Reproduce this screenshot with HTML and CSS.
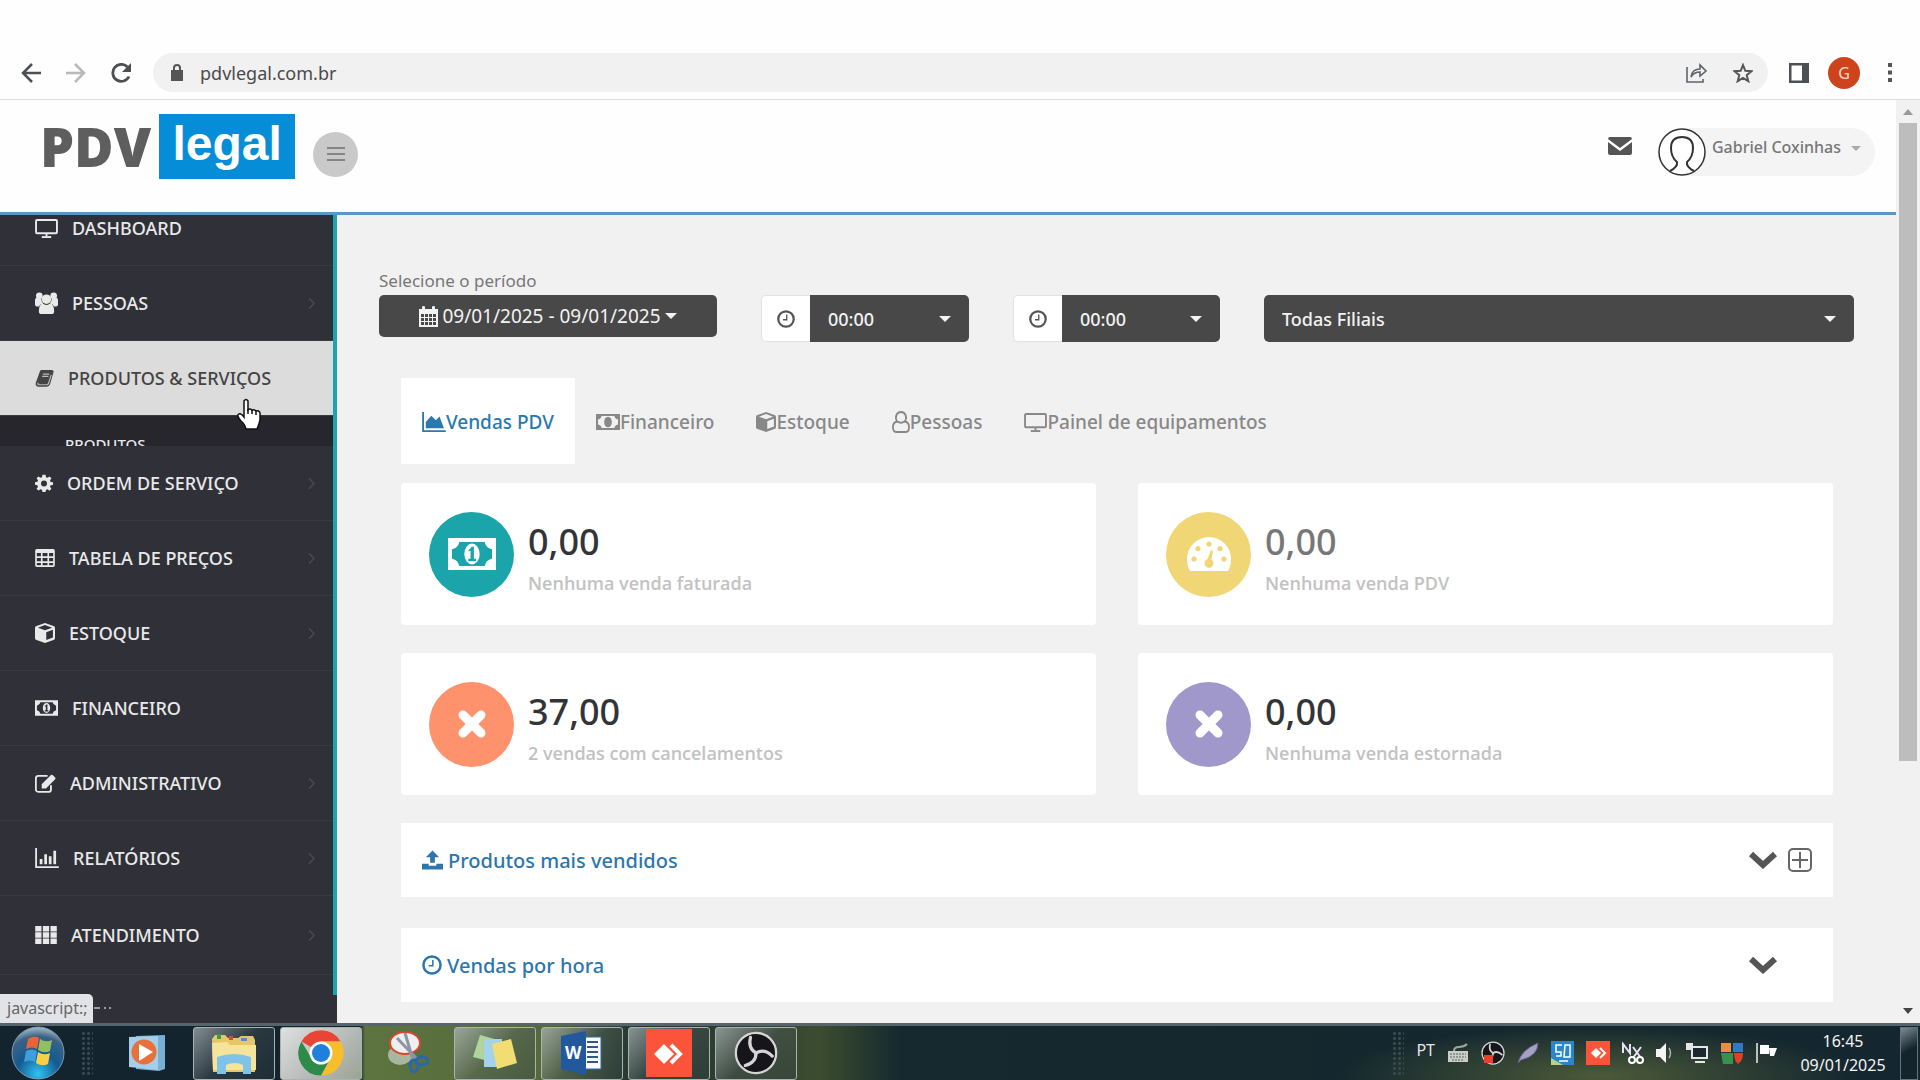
FILE: index.html
```html
<!DOCTYPE html>
<html lang="pt-BR">
<head>
<meta charset="utf-8">
<title>PDV Legal</title>
<link rel="stylesheet" href="styles.css">
</head>
<body>
<svg class="defs" aria-hidden="true">
  <symbol id="i-monitor" viewBox="0 0 24 20"><path fill="none" stroke="currentColor" stroke-width="2" d="M2 1h20q1 0 1 1v12q0 1-1 1H2q-1 0-1-1V2q0-1 1-1zM12 15v3"/><path fill="currentColor" d="M7 18h10v2H7z"/></symbol>
  <symbol id="i-people" viewBox="0 0 24 24"><g fill="currentColor"><circle cx="4.500" cy="4" r="3.500"/><circle cx="19.500" cy="4" r="3.500"/><circle cx="12" cy="7.500" r="5"/><path d="M0 13V9q0-3 2-3 2 2 4.500 1 0 3 2 5-3 0-4.500 3H2q-2 0-2-2zM24 13V9q0-3-2-3-2 2-4.500 1 0 3-2 5 3 0 4.500 3h2q2 0 2-2zM4 20q0-7 4-8 4 3 8 0 4 1 4 8 0 3-3 3H7q-3 0-3-3z"/></g></symbol>
  <symbol id="i-book" viewBox="0 0 24 24"><path fill="currentColor" d="M8 2h13q3 0 2.300 3L19 20q-1 3-4 3H4q-4-1-3-5L6 4q.5-2 2-2z"/><path fill="none" stroke="#bbb" stroke-width="1.500" d="M10 7h8M9 10h8M4 18q-1 2.500 1 2.500h10q1.500 0 2-1.500l3.500-11"/></symbol>
  <symbol id="i-gear" viewBox="0 0 24 24"><path fill="currentColor" fill-rule="evenodd" d="M10 1h4l.7 3.300 2 .8L19.500 3.300l2.400 2.400L20 8.500l.8 2L24 11v3.500l-3.200.6-.8 2 1.900 2.700-2.500 2.400-2.700-1.800-2 .8L14 24h-4l-.7-3-2-.8-2.800 1.900L2 19.700 4 17l-.9-2L0 14.400V11l3.200-.6.8-2L2.100 5.700 4.500 3.300l2.800 1.800 2-.8zM12 8.500a4 4 0 1 0 0 8 4 4 0 1 0 0-8z"/></symbol>
  <symbol id="i-table" viewBox="0 0 24 22"><path fill="currentColor" fill-rule="evenodd" d="M2 0h20q2 0 2 2v18q0 2-2 2H2q-2 0-2-2V2Q0 0 2 0zM2 5v4h5V5zM9 5v4h6V5zM17 5v4h5V5zM2 11v4h5v-4zM9 11v4h6v-4zM17 11v4h5v-4zM2 17v3h5v-3zM9 17v3h6v-3zM17 17v3h5v-3z"/></symbol>
  <symbol id="i-cube" viewBox="0 0 24 24"><path fill="currentColor" fill-rule="evenodd" d="M12 0l11 4q1 .5 1 2v12q0 1.300-1 2l-11 4-11-4q-1-.6-1-2V6q0-1.500 1-2zM12 2.500L3.500 5.600 12 8.800l8.500-3.200zM13.500 20.500l8-3V8l-8 3z"/></symbol>
  <symbol id="i-money" viewBox="0 0 30 20"><path fill="currentColor" fill-rule="evenodd" d="M0 0h30v20H0zM7 2.500Q6.500 6 2.500 7v6q4 1 4.500 4.500h16q.5-3.500 4.500-4.500V7q-4-1-4.500-4.500z"/><ellipse cx="15" cy="10" rx="4.800" ry="6.500" fill="currentColor"/><path class="cut" d="M12.800 7.800l2-2.300h1.400v7.500h1.300v1.500h-4.800V13h1.400V8l-1.300.5z"/></symbol>
  <symbol id="i-edit" viewBox="0 0 25 22"><path fill="none" stroke="currentColor" stroke-width="2.200" d="M19 13v5q0 3-3 3H4q-3 0-3-3V5q0-3 3-3h11"/><path fill="currentColor" d="M8 17v-5L19 1q1-1 2 0l3 3q1 1 0 2L13 17z"/></symbol>
  <symbol id="i-bars" viewBox="0 0 26 22"><path fill="currentColor" d="M0 0h2v20h24v2H0zM5 12h3v6H5zM10 7h3v11h-3zM15 9h3v9h-3zM20 3h3v15h-3z"/></symbol>
  <symbol id="i-grid" viewBox="0 0 24 20"><path fill="currentColor" d="M0 0h7v6H0zM8.500 0h7v6h-7zM17 0h7v6h-7zM0 7h7v6H0zM8.500 7h7v6h-7zM17 7h7v6h-7zM0 14h7v6H0zM8.500 14h7v6h-7zM17 14h7v6h-7z"/></symbol>
  <symbol id="i-chev" viewBox="0 0 8 14"><path fill="none" stroke="currentColor" stroke-width="1.500" d="M1 1l6 6-6 6"/></symbol>
  <symbol id="i-clock" viewBox="0 0 24 24"><circle cx="12" cy="12" r="10.300" fill="none" stroke="currentColor" stroke-width="3"/><path fill="none" stroke="currentColor" stroke-width="1.800" d="M13 6v7H8"/></symbol>
  <symbol id="i-area" viewBox="0 0 26 22"><path fill="currentColor" d="M0 0h2v20h24v2H0zM4 18v-7l6-7 5 5 4-4 5 13z"/></symbol>
  <symbol id="i-user" viewBox="0 0 18 22"><path fill="none" stroke="currentColor" stroke-width="1.800" d="M9 1a5 5.500 0 0 1 3.500 9.500Q17 11 17 16q0 5-3 5H4q-3 0-3-5 0-5 4.500-5.500A5 5.500 0 0 1 9 1zM5.500 10.500q3.500 2.500 7 0"/></symbol>
  <symbol id="i-times" viewBox="0 0 30 30"><path stroke="currentColor" stroke-width="9" stroke-linecap="round" d="M6 6l18 18M24 6L6 24"/></symbol>
  <symbol id="i-dash" viewBox="0 0 44 34"><path fill="currentColor" d="M3 34Q0 29 0 22a22 22 0 0 1 44 0q0 7-3 12z"/><g class="cut"><circle cx="7" cy="22" r="2.600"/><circle cx="11" cy="11.500" r="2.600"/><circle cx="22" cy="7" r="2.600"/><circle cx="33" cy="11.500" r="2.600"/><circle cx="37" cy="22" r="2.600"/><path d="M24 13l2 1-1.500 8.500a4.500 4.500 0 1 1-4-.5z"/></g></symbol>
  <symbol id="i-upload" viewBox="0 0 22 20"><path fill="currentColor" d="M11 0l7 7h-4.500v6h-5V7H4zM0 14h7v2h8v-2h7v6H0z"/></symbol>
  <symbol id="i-down" viewBox="0 0 28 18"><path fill="none" stroke="currentColor" stroke-width="6" d="M2 3l12 11L26 3"/></symbol>
  <symbol id="i-obs" viewBox="0 0 48 48"><circle cx="24" cy="24" r="22" fill="#15151a" stroke="#d5d5d5" stroke-width="2.500"/><path id="obs-arm" fill="none" stroke="#d5d5d5" stroke-width="3.500" stroke-linecap="round" d="M24 24q-9-5-6-17"/><use href="#obs-arm" transform="rotate(120 24 24)"/><use href="#obs-arm" transform="rotate(240 24 24)"/></symbol>
</svg>

<header class="toolbar">
  <button class="tool" aria-label="Voltar"><svg width="20" height="20" viewBox="0 0 20 20"><path fill="none" stroke="#4d5053" stroke-width="2.500" d="M20 10H2M11 1l-9 9 9 9"/></svg></button>
  <button class="tool" aria-label="Avançar"><svg width="20" height="20" viewBox="0 0 20 20"><path fill="none" stroke="#b9b9b9" stroke-width="2.500" d="M0 10h18M9 1l9 9-9 9"/></svg></button>
  <button class="tool" aria-label="Recarregar"><svg width="21" height="20" viewBox="0 0 21 20"><path fill="none" stroke="#4d5053" stroke-width="2.800" d="M18 13.500A8.500 8.500 0 1 1 16.500 4"/><path fill="#4d5053" d="M20 0v9h-9z"/></svg></button>
  <div class="omnibox">
    <svg width="12" height="17" viewBox="0 0 12 17"><path fill="#555" d="M0 6h12v11H0z"/><path fill="none" stroke="#555" stroke-width="2" d="M3 7V4a3 3 0 0 1 6 0v3"/></svg>
    <input class="url" aria-label="Endereço" value="pdvlegal.com.br">
    <button class="tool" aria-label="Compartilhar"><svg width="22" height="20" viewBox="0 0 22 20"><path fill="none" stroke="#5f6368" stroke-width="1.600" d="M1 4v15h16v-3M5 14q1-8 9-8V2l6 6-6 5V9q-6 0-9 5z"/></svg></button>
    <button class="tool" aria-label="Favoritos"><svg width="20" height="20" viewBox="0 0 20 20"><path fill="none" stroke="#555" stroke-width="2" d="M10 2l2.300 5.800 6.200.4-4.800 4 1.600 6-5.300-3.300-5.300 3.300 1.600-6-4.800-4 6.200-.4z"/></svg></button>
  </div>
  <button class="tool" aria-label="Painel lateral"><svg width="20" height="20" viewBox="0 0 20 20"><path fill="#4d5053" fill-rule="evenodd" d="M0 0h20v20H0zM2.500 2.500v15H13v-15z"/></svg></button>
  <button class="profile">G</button>
  <button class="tool" aria-label="Menu"><svg width="4" height="19" viewBox="0 0 4 19"><path fill="#555" d="M0 0h4v4H0zM0 7.500h4v4H0zM0 15h4v4H0z"/></svg></button>
</header>

<div class="viewport">
  <div class="page">
    <div class="sitebar">
      <a class="logo" href="#"><span class="logo-pdv">PDV</span><span class="logo-legal">legal</span></a>
      <button class="burger" aria-label="Alternar menu"><svg width="18" height="16" viewBox="0 0 18 16"><path stroke="#858585" stroke-width="2" d="M0 2h18M0 8h18M0 14h18"/></svg></button>
      <button class="mail" aria-label="Mensagens"><svg width="24" height="18" viewBox="0 0 24 18"><path fill="#555" d="M2 0h20q2 0 2 2l-12 9L0 2Q0 0 2 0zM0 5l12 9 12-9v11q0 2-2 2H2q-2 0-2-2z"/></svg></button>
      <button class="account">
        <svg width="48" height="48" viewBox="0 0 48 48"><circle cx="24" cy="24" r="23" fill="#fff" stroke="#333" stroke-width="1.500"/><path fill="none" stroke="#333" stroke-width="2" d="M12 43q8-4 7-9-6-5-6-14 0-11 11-11t11 11q0 9-6 14-1 5 7 9"/></svg>
        <span>Gabriel Coxinhas</span><i class="caret"></i>
      </button>
    </div>
    <div class="columns">
      <nav class="sidebar">
        <ul class="menu">
          <li><a class="item" href="#"><svg width="23" height="19"><use href="#i-monitor"/></svg>DASHBOARD</a></li>
          <li><a class="item" href="#"><svg width="23" height="23"><use href="#i-people"/></svg>PESSOAS<svg class="chev"><use href="#i-chev"/></svg></a></li>
          <li><a class="item active" href="#"><svg width="19" height="20"><use href="#i-book"/></svg>PRODUTOS &amp; SERVIÇOS</a>
            <ul class="submenu"><li><a href="#">PRODUTOS</a></li></ul></li>
          <li><a class="item" href="#"><svg width="18" height="18"><use href="#i-gear"/></svg>ORDEM DE SERVIÇO<svg class="chev"><use href="#i-chev"/></svg></a></li>
          <li><a class="item" href="#"><svg width="20" height="18"><use href="#i-table"/></svg>TABELA DE PREÇOS<svg class="chev"><use href="#i-chev"/></svg></a></li>
          <li><a class="item" href="#"><svg width="20" height="20"><use href="#i-cube"/></svg>ESTOQUE<svg class="chev"><use href="#i-chev"/></svg></a></li>
          <li><a class="item" href="#"><svg width="23" height="16"><use href="#i-money"/></svg>FINANCEIRO</a></li>
          <li><a class="item" href="#"><svg width="21" height="19"><use href="#i-edit"/></svg>ADMINISTRATIVO<svg class="chev"><use href="#i-chev"/></svg></a></li>
          <li><a class="item" href="#"><svg width="24" height="20"><use href="#i-bars"/></svg>RELATÓRIOS<svg class="chev"><use href="#i-chev"/></svg></a></li>
          <li><a class="item tall" href="#"><svg width="22" height="18"><use href="#i-grid"/></svg>ATENDIMENTO<svg class="chev"><use href="#i-chev"/></svg></a></li>
        </ul>
      </nav>
      <main class="content">
        <form class="filters">
          <div class="field">
            <label for="period">Selecione o período</label>
            <button type="button" id="period" class="period"><svg width="19" height="21" viewBox="0 0 19 21"><path fill="#f2f2f2" fill-rule="evenodd" d="M0 3h3V1q0-1 1.500-1T6 1v2h7V1q0-1 1.500-1T16 1v2h3v18H0zM2 8v3h3V8zM6 8v3h3V8zM10 8v3h3V8zM14 8v3h3V8zM2 12v3h3v-3zM6 12v3h3v-3zM10 12v3h3v-3zM14 12v3h3v-3zM2 16v3h3v-3zM6 16v3h3v-3zM10 16v3h3v-3zM14 16v3h3v-3z"/></svg>09/01/2025 - 09/01/2025<i class="caret"></i></button>
          </div>
          <div class="time"><span class="addon"><svg width="18" height="18"><use href="#i-clock"/></svg></span><div class="drop"><select aria-label="Hora inicial"><option>00:00</option></select><i class="caret"></i></div></div>
          <div class="time"><span class="addon"><svg width="18" height="18"><use href="#i-clock"/></svg></span><div class="drop"><select aria-label="Hora final"><option>00:00</option></select><i class="caret"></i></div></div>
          <div class="drop branch"><select aria-label="Filial"><option>Todas Filiais</option></select><i class="caret"></i></div>
        </form>
        <div class="board">
          <nav class="tabs">
            <a class="tab current" href="#"><svg width="24" height="20"><use href="#i-area"/></svg>Vendas PDV</a>
            <a class="tab" href="#"><svg width="24" height="16"><use href="#i-money"/></svg>Financeiro</a>
            <a class="tab" href="#"><svg width="20" height="20"><use href="#i-cube"/></svg>Estoque</a>
            <a class="tab" href="#"><svg width="18" height="22"><use href="#i-user"/></svg>Pessoas</a>
            <a class="tab" href="#"><svg width="23" height="19"><use href="#i-monitor"/></svg>Painel de equipamentos</a>
          </nav>
          <section class="cards">
            <article class="card"><span class="dot teal"><svg width="48" height="32"><use href="#i-money"/></svg></span><div class="figures"><p class="num">0,00</p><p class="desc">Nenhuma venda faturada</p></div></article>
            <article class="card"><span class="dot yellow"><svg width="44" height="34"><use href="#i-dash"/></svg></span><div class="figures"><p class="num faded">0,00</p><p class="desc">Nenhuma venda PDV</p></div></article>
            <article class="card"><span class="dot orange"><svg width="30" height="30"><use href="#i-times"/></svg></span><div class="figures"><p class="num">37,00</p><p class="desc">2 vendas com cancelamentos</p></div></article>
            <article class="card"><span class="dot purple"><svg width="30" height="30"><use href="#i-times"/></svg></span><div class="figures"><p class="num">0,00</p><p class="desc">Nenhuma venda estornada</p></div></article>
          </section>
          <section class="panel">
            <h2><svg width="21" height="20"><use href="#i-upload"/></svg>Produtos mais vendidos</h2>
            <button class="tool" aria-label="Expandir"><svg width="28" height="18"><use href="#i-down"/></svg></button>
            <button class="tool plus" aria-label="Adicionar"><svg width="24" height="24" viewBox="0 0 24 24"><rect x="1" y="1" width="22" height="22" rx="4" fill="none" stroke="#666" stroke-width="2"/><path stroke="#666" stroke-width="2" d="M4 12h16M12 4v16"/></svg></button>
          </section>
          <section class="panel">
            <h2><svg width="20" height="20"><use href="#i-clock"/></svg>Vendas por hora</h2>
            <button class="tool" aria-label="Expandir"><svg width="28" height="18"><use href="#i-down"/></svg></button>
            <span class="plus"></span>
          </section>
        </div>
      </main>
    </div>
  </div>
  <div class="scroll"><i class="arrow up"></i><div class="thumb"></div><i class="arrow down"></i></div>
  <div class="status">javascript:;<svg class="loading" width="18" height="4" viewBox="0 0 18 4"><path stroke="#9a9ba0" stroke-width="2" d="M0 2h6M10 2h2M15 2h2"/></svg></div>
  <svg class="cursor" width="26" height="32" viewBox="0 0 26 32"><path fill="#fff" stroke="#111" stroke-width="1.500" d="M7 3q2-3 4 0v9q2-2 4 0 2-1 4 1 3-1 4 2v7q-1 5-3 9H9q-1-5-5-8-5-6-2-7 2-1 5 3z"/><path stroke="#111" stroke-width="1.500" d="M11 11v5M15 12v4M19 13v4"/></svg>
</div>

<footer class="taskbar">
  <button class="start" aria-label="Iniciar"><svg width="54" height="54" viewBox="0 0 54 54"><defs><radialGradient id="orb" cx=".5" cy=".9" r=".9"><stop offset="0" stop-color="#2fc4f2"/><stop offset=".45" stop-color="#145a92"/><stop offset=".8" stop-color="#3b6286"/><stop offset="1" stop-color="#a9bccb"/></radialGradient></defs><circle cx="27" cy="27" r="26" fill="url(#orb)" stroke="#7d9bb0"/><path fill="#ec6237" d="M17 13q6-4 11-1l-2 11q-5-3-11 0z"/><path fill="#92bf62" d="M29 13q6 4 12 1l-2 11q-6 3-12-1z"/><path fill="#3da0dd" d="M15 25q6-3 11 0l-2 11q-5-3-11 0z"/><path fill="#f8cf45" d="M27 26q6 4 12 1l-2 11q-6 3-12-1z"/></svg></button>
  <span class="grip"></span>
  <div class="apps">
    <button class="app" aria-label="Media Player"><svg width="38" height="38" viewBox="0 0 38 38"><path fill="#79b0d6" d="M8 2l29-1v34l-6 2-23-2z"/><path fill="#a5cfe8" d="M1 3l29-1v34L1 33z"/><circle cx="16" cy="18" r="12.500" fill="#e8703a"/><path fill="#fff" d="M11 10l14 8-14 9z"/></svg></button>
    <button class="app open" aria-label="Explorador"><svg width="46" height="44" viewBox="0 0 46 44"><path fill="#e6c765" d="M1 8l3-4h10l3 3h10l3-2h12l2 4v32H2z"/><path fill="#f7e49c" d="M1 12l15-1 3 3h26v25H2z"/><path fill="#3b9b4a" d="M6 3h4v5H6z"/><path fill="#d14d3b" d="M18 5h4v4h-4z"/><path fill="#4d92d0" d="M30 7h6v3h-6z"/><path fill="#7fc4e8" d="M6 26q17-6 34 0v17h-8v-9q-8-4-17 0v9H6z"/></svg></button>
    <button class="app open front" aria-label="Chrome"><svg width="46" height="46" viewBox="0 0 46 46"><path fill="#e94436" d="M23 23L3.500 11.500A22.500 22.500 0 0 1 42.500 11.500H23z"/><path fill="#f8bd2a" d="M42.500 11.500A22.500 22.500 0 0 1 23 45.500L33 28 33 17 23 11.500z"/><path fill="#2e8a49" d="M3.500 11.500A22.500 22.500 0 0 0 23 45.500L32 29 14 29z"/><circle cx="23" cy="23" r="11.500" fill="#fff"/><circle cx="23" cy="23" r="9" fill="#1e7fdd"/></svg></button>
    <button class="app" aria-label="Captura"><svg width="46" height="46" viewBox="0 0 46 46"><ellipse cx="15" cy="25" rx="12" ry="10" fill="#a9b6a0"/><ellipse cx="20" cy="13" rx="15" ry="11" fill="#efefef" stroke="#d8462e" stroke-width="2"/><path stroke="#8a96a3" stroke-width="3" d="M12 8l20 21M20 3l8 27"/><g fill="none" stroke="#2c68a6" stroke-width="3"><ellipse cx="37" cy="31" rx="6" ry="4"/><ellipse cx="29" cy="36" rx="4" ry="6"/></g></svg></button>
    <button class="app open" aria-label="Notas"><svg width="46" height="40" viewBox="0 0 46 40"><path fill="#afd49c" d="M8 2l18 5-6 22L1 24z"/><path fill="#a4d2ea" d="M12 6h18v28H12z"/><path fill="#f2dd72" d="M20 11l19-5 6 24-20 6z"/></svg></button>
    <button class="app open" aria-label="Word"><svg width="42" height="44" viewBox="0 0 42 44"><path fill="#f7f9fb" stroke="#3069a8" d="M20 6h20v32H20z"/><path stroke="#31588a" stroke-width="2" d="M26 11h11M26 16h11M26 21h11M26 26h11M26 31h11"/><path fill="#22599c" d="M0 5l25-5v44L0 38z"/><text x="4" y="28" font-size="17" class="word-w">W</text></svg></button>
    <button class="app open" aria-label="AnyDesk"><svg width="46" height="48" viewBox="0 0 46 48"><path fill="#fb543a" d="M0 0h46v48H0z"/><path fill="#fff" d="M8 25l10-10 10 10-10 10z"/><path fill="none" stroke="#fff" stroke-width="4" d="M25 16l9 9-9 9"/></svg></button>
    <button class="app open" aria-label="OBS"><svg width="44" height="44"><use href="#i-obs"/></svg></button>
  </div>
  <span class="grip tray-grip"></span>
  <div class="tray">
    <span class="lang">PT</span>
    <svg width="22" height="20" viewBox="0 0 22 20"><path fill="#c9cec8" d="M1 8h20v11H1z"/><path stroke="#56625a" stroke-dasharray="2 1" d="M3 11h16M3 14h16M5 17h12"/><path fill="none" stroke="#9ca69e" stroke-width="2" d="M7 8q0-4 5-4t8-3"/></svg>
    <svg width="24" height="24" viewBox="0 0 24 24"><use href="#i-obs" width="24" height="24"/><path fill="#ef3d2a" d="M3 14h9v8H3z"/></svg>
    <svg width="22" height="22" viewBox="0 0 22 22"><path fill="#a5a0c4" stroke="#625f90" d="M1 21Q4 8 21 1q0 13-17 17z"/></svg>
    <svg width="23" height="24" viewBox="0 0 23 24"><path fill="#2887cb" d="M0 0h23v24H0z"/><path fill="#b2d38c" d="M0 17l12 7H0z"/><path fill="none" stroke="#fff" stroke-width="1.500" d="M11 4H5v7h5v4H5M14 4h5v12h-6zM8 20h9"/></svg>
    <svg width="24" height="24" viewBox="0 0 24 24"><path fill="#fb543a" d="M0 0h24v24H0z"/><path fill="#fff" d="M5 12l5-5 5 5-5 5z"/><path fill="none" stroke="#fff" stroke-width="2" d="M14 7l5 5-5 5"/></svg>
    <svg width="22" height="22" viewBox="0 0 22 22"><path fill="none" stroke="#e6e2f2" stroke-width="2" d="M1 11V2l7 9V2M11 5l8 11M19 5l-8 11"/><g fill="none" stroke="#fff" stroke-width="2"><circle cx="10" cy="18" r="3"/><circle cx="18" cy="18" r="3"/></g></svg>
    <svg width="18" height="20" viewBox="0 0 18 20"><path fill="#f4f4f4" d="M0 6h4l6-6v20l-6-6H0z"/><path fill="none" stroke="#aab3ad" stroke-width="1.500" d="M13 5q3 5 0 10"/></svg>
    <svg width="22" height="20" viewBox="0 0 22 20"><path fill="#1c2830" stroke="#e6e6e6" stroke-width="2" d="M6 4h15v11H6zM9 19h10"/><path fill="#e6e6e6" d="M0 0h7v7H0z"/></svg>
    <svg width="24" height="23" viewBox="0 0 24 23"><path fill="#f08b42" d="M1 1h10v9H1z"/><path fill="#2e79c8" d="M13 1h10v9H13z"/><path fill="#37924b" d="M1 11h12v11H3z"/><path fill="#dd4127" d="M14 11h9q0 8-5 11-4-3-4-11z"/></svg>
    <svg width="21" height="20" viewBox="0 0 21 20"><path stroke="#eee" stroke-width="1.500" d="M1 0v20"/><path fill="#fff" d="M4 2h9v9H4zM13 5h8l-3 8h-4z"/></svg>
  </div>
  <div class="clock"><span>16:45</span><span>09/01/2025</span></div>
  <button class="peek" aria-label="Mostrar área de trabalho"></button>
</footer>
</body>
</html>
```
FILE: styles.css
```css
* { box-sizing: border-box; }
body { margin: 0; min-height: 100vh; display: flex; flex-direction: column; background: #fefefe; font-family: "Noto Sans", sans-serif; font-size: 18px; color: #555; }
button, input, select { font: inherit; color: inherit; border: 0; padding: 0; background: none; }
a { color: inherit; text-decoration: none; }
ul { list-style: none; margin: 0; padding: 0; }
p, h2 { margin: 0; }
svg { display: block; flex: none; }
.defs { position: absolute; width: 0; height: 0; }
.cut { fill: var(--cut, #303138); }
.tool { display: flex; align-items: center; flex: none; }
.caret { border: 6px solid transparent; border-top-color: currentColor; border-bottom: 0; }

.toolbar { display: flex; align-items: center; gap: 25px; height: 100px; padding: 46px 28px 0 21px; border-bottom: 1px solid #dcdcdc; }
.omnibox { flex: 1; display: flex; align-items: center; gap: 25px; height: 39px; margin: 0 -4px; padding: 0 15px 0 18px; border-radius: 20px; background: #f1f1f2; }
.url { flex: 1; min-width: 0; margin-left: -8px; outline: 0; color: #4a4a4a; }
.profile { width: 32px; height: 32px; border-radius: 50%; background: #cf431c; color: #ffd9c9; font-size: 16px; margin: 0 3px 0 -6px; }

.viewport { position: relative; flex: 1; display: flex; }
.page { flex: 1; display: flex; flex-direction: column; }
.sitebar { display: flex; align-items: center; height: 115px; padding: 0 21px 0 40px; border-bottom: 3px solid #5b97c6; }
.logo { display: flex; align-items: center; gap: 8px; margin-bottom: 20px; }
.logo-pdv { font: 800 54px/64px "Open Sans", sans-serif; color: #5d5e5d; }
.logo-legal { width: 136px; height: 65px; background: #068dd8; color: #fff; font: 700 48px/60px "Liberation Sans", sans-serif; text-align: center; }
.burger { display: grid; place-items: center; width: 45px; height: 45px; margin: 0 auto 4px 18px; border-radius: 50%; background: #c9c9c9; }
.mail { margin: 0 26px 20px 0; }
.account { display: flex; align-items: center; gap: 6px; height: 48px; margin-bottom: 8px; padding-right: 14px; border-radius: 24px; background: #f4f4f4; color: #777; font-size: 16px; font-weight: 500; }
.account span { margin-bottom: 10px; }
.account .caret { margin: 0 0 8px 4px; border-width: 5px; border-bottom: 0; color: #aaa; }

.columns { flex: 1; display: flex; }
.sidebar { width: 337px; flex: none; overflow: hidden; background: #303138; color: #e9e9ea; }
.menu { margin-top: -24px; height: 804px; border-right: 4px solid #1ba5b0; }
.item { display: flex; align-items: center; gap: 14px; height: 75px; padding: 0 18px 0 35px; border-bottom: 1px solid #3a3a40; font-size: 18px; font-weight: 500; }
.tall { height: 79px; }
.chev { width: 7px; height: 13px; margin-left: auto; color: #474c57; }
.active { background: #dcdcdd; color: #444; }
.submenu { height: 30px; overflow: hidden; padding: 16px 0 0 65px; background: #26262c; font-size: 15px; font-weight: 500; line-height: 24px; }

.content { flex: 1; min-width: 0; padding: 52px 42px 20px; background: #f1f1f2; }
.filters { display: grid; grid-template-columns: 338px 208px 207px 1fr; gap: 44px; align-items: end; }
.field { display: grid; gap: 1px; margin-bottom: 5px; color: #777; }
.field label { line-height: 27px; font-size: 17px; }
.period { display: flex; align-items: center; justify-content: center; gap: 4px; height: 42px; border-radius: 5px; background: #484848; color: #f2f2f2; font-size: 19px; }
.time { display: flex; height: 47px; color: #555; }
.addon { display: grid; place-items: center; width: 49px; border: 1px solid #e2e2e2; border-right: 0; border-radius: 5px 0 0 5px; background: #fff; }
.drop { position: relative; flex: 1; height: 47px; color: #f2f2f2; }
.drop select { appearance: none; width: 100%; height: 100%; padding: 0 18px; border-radius: 5px; background: #484848; font-weight: 500; }
.time select { border-radius: 0 5px 5px 0; }
.drop .caret { position: absolute; right: 18px; top: 21px; }

.board { display: grid; padding: 36px 21px 0 22px; }
.tabs { display: flex; }
.tab { display: flex; align-items: center; height: 86px; padding: 2px 21px 0; color: #888; font-size: 19px; font-weight: 500; --cut: #888; }
.current { background: #fff; color: #2a78b0; }
.cards { display: grid; grid-template-columns: 1fr 1fr; gap: 28px 42px; margin-top: 19px; }
.card { display: flex; align-items: center; gap: 14px; height: 142px; padding: 0 28px; border-radius: 4px; background: #fff; }
.figures { padding-top: 8px; }
.dot { display: grid; place-items: center; width: 85px; height: 85px; border-radius: 50%; color: #fff; --cut: #1ba4aa; }
.teal { background: #1ba4aa; }
.yellow { background: #f1d675; --cut: #f1d675; }
.orange { background: #fd926d; }
.purple { background: #a098cb; }
.num { font-size: 36px; line-height: 44px; font-weight: 500; color: #333438; }
.faded { color: #777; }
.desc { margin-top: 6px; font: 600 18px/26px "Open Sans", sans-serif; color: #c2c2c2; }
.panel { display: flex; align-items: center; gap: 11px; height: 74px; margin-top: 28px; padding: 0 21px; background: #fff; }
.panel + .panel { margin-top: 31px; }
.panel h2 { flex: 1; display: flex; align-items: center; gap: 5px; font-size: 20px; font-weight: 500; color: #2d76ac; }
.plus { width: 24px; }

.scroll { width: 24px; display: flex; flex-direction: column; align-items: center; padding: 9px 0; background: #f1f1f1; }
.thumb { width: 18px; height: 638px; margin: 8px 0 auto; background: #bdbdbd; }
.arrow { border: 5px solid transparent; }
.up { border-top: 0; border-bottom: 6px solid #999; }
.down { border-bottom: 0; border-top: 6px solid #444; }
.status { position: absolute; left: 0; bottom: 0; width: 93px; height: 29px; padding-left: 7px; border-radius: 0 5px 0 0; background: #e2e3e6; color: #666; font-size: 16px; line-height: 29px; }
.loading { position: absolute; left: 94px; top: 12px; }
.cursor { position: absolute; left: 237px; top: 298px; }

.taskbar { display: flex; align-items: center; height: 57px; border-top: 3px solid #56656c; padding-right: 2px; background: radial-gradient(ellipse 260px 50px at 1600px 50px, #4c5a38, transparent), linear-gradient(90deg, #14242e 0 360px, #5d7440 365px, #55693b 540px, #22342f 640px, #3c4c2f 820px, #16292e 900px, #14262f); }
.start { margin-left: 11px; }
.grip { width: 12px; height: 44px; margin-left: 16px; background: radial-gradient(#3a4950 1px, transparent 2px) 0 0 / 5px 5px; }
.apps { display: flex; gap: 5px; margin-left: 13px; }
.app { display: grid; place-items: center; width: 82px; height: 53px; border-radius: 3px; }
.open { border: 1px solid #a9b3b0; background: linear-gradient(135deg, #b9c1c4aa, #56616655 50%, #30404855); }
.front { background: linear-gradient(135deg, #dfe0e0, #b4b8b6 60%, #9ba394); }
.word-w { fill: #fff; font-weight: 700; }
.tray-grip { margin-left: auto; margin-right: 12px; }
.tray { display: flex; align-items: center; gap: 12px; color: #e6e6e6; }
.lang { margin-bottom: 6px; font-size: 16px; }
.clock { display: grid; width: 100px; margin: 0 7px 0 16px; text-align: center; color: #f3f3f3; font-size: 16px; line-height: 24px; }
.peek { width: 18px; height: 53px; border: 1px solid #65757d; background: linear-gradient(150deg, #7d8b92, #14242d 45%); }
```
